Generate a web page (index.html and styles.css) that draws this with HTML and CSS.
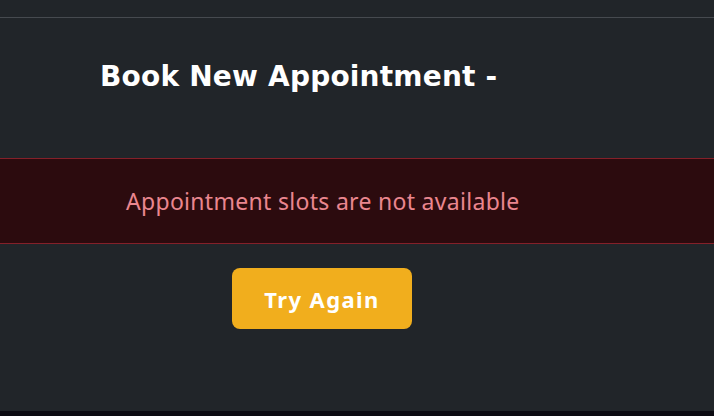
FILE: index.html
```html
<!DOCTYPE html>
<html lang="en">
<head>
    <meta charset="UTF-8">
    <meta name="viewport" content="width=device-width, initial-scale=1.0">
    <title>Book New Appointment</title>
    <link rel="stylesheet" href="styles.css">
</head>
<body>
    <div class="page">
        <div class="top-bar"></div>

        <section class="booking">
            <h1 class="booking-title">Book New Appointment -</h1>

            <div class="alert-danger">
                <p>Appointment slots are not available</p>
            </div>

            <div class="actions">
                <button class="btn-retry">Try Again</button>
            </div>
        </section>
    </div>
    <footer class="bottom-strip"></footer>
</body>
</html>
```

FILE: styles.css
```css
/* Page */
html, body {
    height: 100%;
}

body {
    margin: 0;
    background: #212529;
    font-family: "Noto Sans", sans-serif;
    display: flex;
    flex-direction: column;
}

.page {
    flex: 1;
}

/* Thin header rule */
.top-bar {
    height: 17px;
    border-bottom: 1px solid #464a4f;
}

/* Heading */
.booking-title {
    margin: 0;
    padding: 42px 0 0 100px;
    height: 98px;
    box-sizing: border-box;
    color: #fff;
    font-family: "DejaVu Sans", sans-serif;
    font-size: 28px;
    font-weight: 700;
    line-height: 34px;
    letter-spacing: 0.2px;
}

/* Error message */
.alert-danger {
    margin-top: 42px;
    height: 84px;
    background: #2c0b0e;
    border-top: 1px solid #842029;
    border-bottom: 1px solid #842029;
    display: flex;
    align-items: center;
    padding-left: 126px;
}

.alert-danger p {
    margin: 0;
    color: #ea868f;
    font-size: 23px;
    letter-spacing: 0.3px;
}

/* Retry button */
.actions {
    padding: 24px 0 0 232px;
}

.btn-retry {
    width: 180px;
    height: 61px;
    border: none;
    border-radius: 8px;
    background: #f1ae1d;
    color: #fff;
    font-family: "Noto Sans", sans-serif;
    font-size: 22px;
    font-weight: 700;
    letter-spacing: 1.4px;
    cursor: pointer;
}

.bottom-strip {
    height: 5px;
    background: #0c0b12;
}
```
